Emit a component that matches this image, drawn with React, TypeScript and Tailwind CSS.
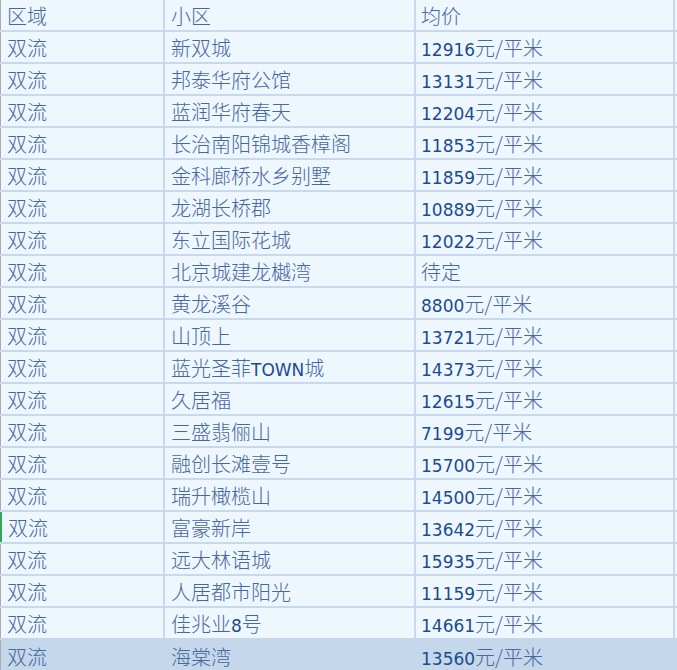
const rows: [string, string, string][] = [
  ['双流', '新双城', '12916元/平米'],
  ['双流', '邦泰华府公馆', '13131元/平米'],
  ['双流', '蓝润华府春天', '12204元/平米'],
  ['双流', '长治南阳锦城香樟阁', '11853元/平米'],
  ['双流', '金科廊桥水乡别墅', '11859元/平米'],
  ['双流', '龙湖长桥郡', '10889元/平米'],
  ['双流', '东立国际花城', '12022元/平米'],
  ['双流', '北京城建龙樾湾', '待定'],
  ['双流', '黄龙溪谷', '8800元/平米'],
  ['双流', '山顶上', '13721元/平米'],
  ['双流', '蓝光圣菲TOWN城', '14373元/平米'],
  ['双流', '久居福', '12615元/平米'],
  ['双流', '三盛翡俪山', '7199元/平米'],
  ['双流', '融创长滩壹号', '15700元/平米'],
  ['双流', '瑞升橄榄山', '14500元/平米'],
  ['双流', '富豪新岸', '13642元/平米'],
  ['双流', '远大林语城', '15935元/平米'],
  ['双流', '人居都市阳光', '11159元/平米'],
  ['双流', '佳兆业8号', '14661元/平米'],
  ['双流', '海棠湾', '13560元/平米'],
];

// latin runs are drawn darker and heavier than the CJK ones
function Mixed({ text }: { text: string }) {
  const parts = text.match(/[A-Za-z0-9]+|[^A-Za-z0-9]+/g) ?? [];
  return (
    <span className="whitespace-nowrap pt-[2px]">
      {parts.map((p, i) =>
        /[A-Za-z0-9]/.test(p) ? (
          <span key={i} className="text-[#1b4c8d] font-['DejaVu_Sans',sans-serif] text-[17px]">
            {p}
          </span>
        ) : (
          <span key={i} className="text-[#47689f] font-light">
            {p}
          </span>
        )
      )}
    </span>
  );
}

function Row({ cells, last, mark, beforeLast }: { cells: string[]; last?: boolean; mark?: boolean; beforeLast?: boolean }) {
  const bg = last ? 'bg-[#c4d7eb]' : 'bg-[#eef6fe]';
  const line = last ? 'border-[#c4d7eb]' : 'border-[#c6d9ee]';
  return (
    <div
      className={`flex h-[32px] shrink-0 ${bg} ${last ? '' : 'border-b-2'} ${beforeLast ? 'border-[#c4d7eb]' : 'border-[#c6d9ee]'}`}
    >
      <div
        className={`flex items-center w-[165px] pl-[6px] border-r-2 ${line} ${
          mark ? 'border-l-2 border-l-[#34a853]' : 'border-l border-l-[#a9adb3]'
        }`}
      >
        <Mixed text={cells[0]} />
      </div>
      <div className={`flex items-center w-[251px] pl-[6px] border-r-2 ${line}`}>
        <Mixed text={cells[1]} />
      </div>
      <div className={`flex items-center w-[259px] pl-[5px] border-r-2 ${line}`}>
        <Mixed text={cells[2]} />
      </div>
      <div className="flex-1" />
    </div>
  );
}

export default function App() {
  return (
    <div className="w-[677px] h-[670px] overflow-hidden bg-white font-['Noto_Sans_CJK_SC','DejaVu_Sans',sans-serif] text-[20px] leading-none">
      <Row cells={['区域', '小区', '均价']} />
      {rows.map((r, i) => (
        <Row
          key={i}
          cells={r}
          last={i === rows.length - 1}
          beforeLast={i === rows.length - 2}
          mark={i === 15}
        />
      ))}
    </div>
  );
}
